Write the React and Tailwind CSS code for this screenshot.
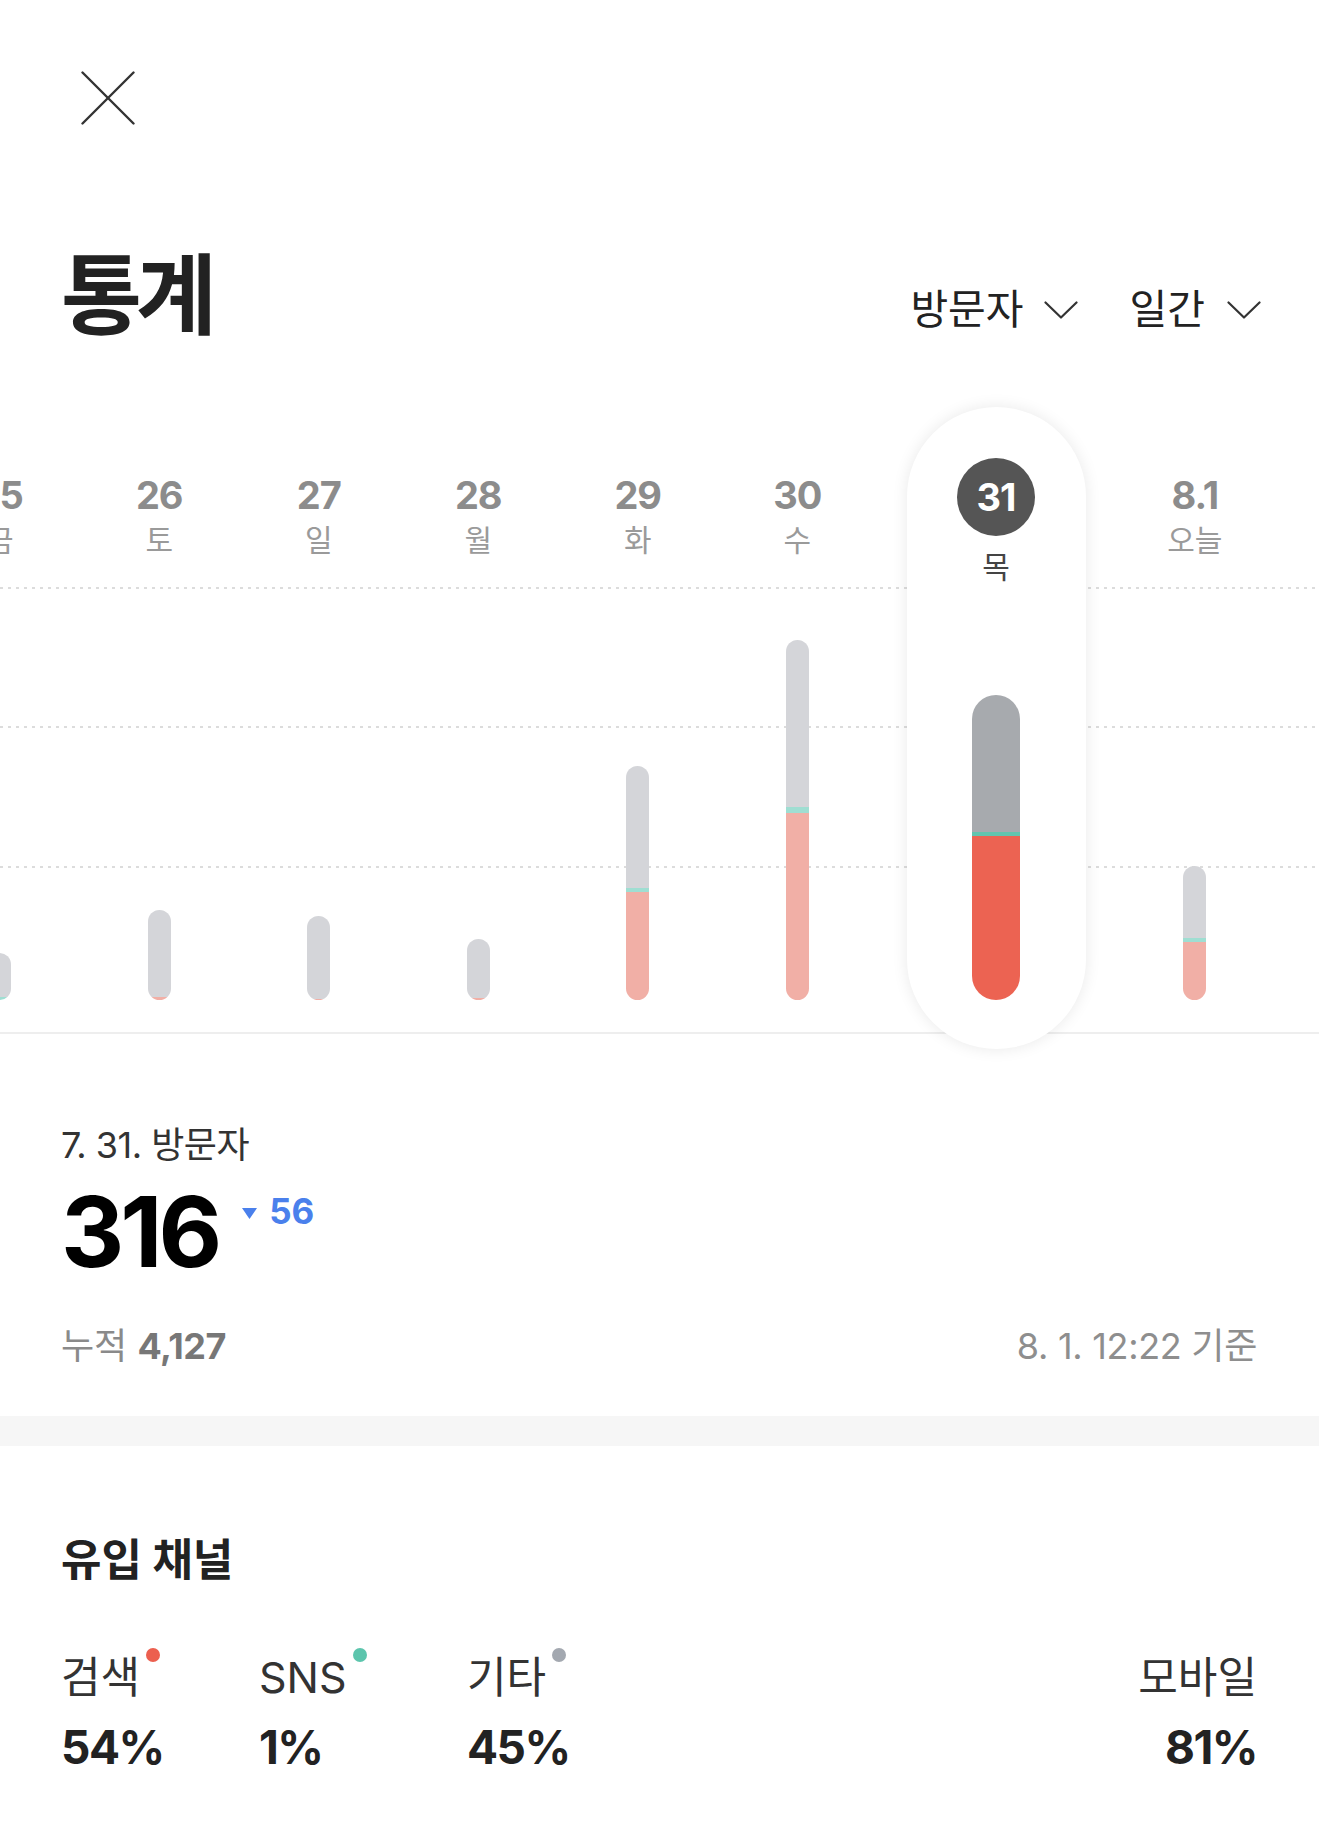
import React from "react";

const days = [
  { d: "25", w: "금", gray: 44, teal: 3, pink: 0 },
  { d: "26", w: "토", gray: 87, teal: 0, pink: 3 },
  { d: "27", w: "일", gray: 83, teal: 0, pink: 1 },
  { d: "28", w: "월", gray: 59, teal: 0, pink: 2 },
  { d: "29", w: "화", gray: 122, teal: 4, pink: 108 },
  { d: "30", w: "수", gray: 167, teal: 6, pink: 187 },
  { d: "31", w: "목", gray: 137, teal: 4, pink: 164, active: true },
  { d: "8.1", w: "오늘", gray: 72, teal: 4, pink: 58 },
];

const channels = [
  { name: "검색", pct: "54%", dot: "bg-[#ec5f4f]", width: "w-[198px]" },
  { name: "SNS", pct: "1%", dot: "bg-[#5cc5ad]", width: "w-[208px]" },
  { name: "기타", pct: "45%", dot: "bg-[#a3a8b0]", width: "w-[160px]" },
];

const Chevron = ({ className }) => (
  <svg width="34" height="18" viewBox="0 0 34 18" className={className}>
    <polyline points="1.5,1.5 17,16.5 32.5,1.5" fill="none" stroke="#333" strokeWidth="2.2" strokeLinecap="round" strokeLinejoin="round" />
  </svg>
);

const Bar = ({ gray, teal, pink, active }) => (
  <div className={`flex flex-col overflow-hidden rounded-full ${active ? "w-[48px]" : "w-[23px]"}`}>
    <div className={active ? "bg-[#a7aaae]" : "bg-[#d4d5d9]"} style={{ height: gray }} />
    {teal > 0 && <div className={active ? "bg-[#62c4ae]" : "bg-[#9fded2]"} style={{ height: teal }} />}
    {pink > 0 && <div className={active ? "bg-[#ec6352]" : "bg-[#f1afa6]"} style={{ height: pink }} />}
  </div>
);

const dotted =
  "absolute left-0 right-0 h-[2px] [background-image:linear-gradient(to_right,#dcdcdc_3px,transparent_3px)] [background-size:8px_2px]";

export default function App() {
  return (
    <div className="w-[1319px] min-h-[1843px] bg-white overflow-hidden font-['Inter','Noto_Sans_CJK_KR',sans-serif]">
      {/* === Close === */}
      <div className="pt-[71px] pl-[81px]">
        <svg width="54" height="54" viewBox="0 0 54 54">
          <line x1="1.5" y1="1.5" x2="52.5" y2="52.5" stroke="#333" strokeWidth="2.4" strokeLinecap="round" />
          <line x1="52.5" y1="1.5" x2="1.5" y2="52.5" stroke="#333" strokeWidth="2.4" strokeLinecap="round" />
        </svg>
      </div>

      {/* === Title row === */}
      <div className="flex items-start justify-between pl-[61px] pr-[58px] mt-[126px]">
        <h1 className="text-[88px] leading-none font-bold tracking-[-6px] text-[#222]">통계</h1>
        <div className="flex items-center mt-[38px] text-[41px] leading-none text-[#222]">
          <span>방문자</span>
          <Chevron className="ml-[20px]" />
          <span className="ml-[52px]">일간</span>
          <Chevron className="ml-[22px]" />
        </div>
      </div>

      {/* === Chart === */}
      <div className="relative mt-[68px] h-[642px]">
        <div className={`${dotted} top-[180px]`} />
        <div className={`${dotted} top-[319px]`} />
        <div className={`${dotted} top-[459px]`} />
        <div className="absolute left-0 right-0 top-[625px] h-[2px] bg-[#eeeeee]" />

        <div className="relative flex h-full ml-[-80px]">
          {days.map((day) =>
            day.active ? (
              <div key={day.d} className="w-[238px] shrink-0 flex justify-center h-full">
                <div className="w-[179px] h-full rounded-full bg-white shadow-[0_0_16px_rgba(0,0,0,0.09)] flex flex-col items-center pt-[51px] pb-[49px]">
                  <div className="w-[78px] h-[78px] rounded-full bg-[#555555] text-white text-[38px] leading-none font-bold flex items-center justify-center tracking-[-1px]">
                    {day.d}
                  </div>
                  <div className="mt-[16px] text-[30px] leading-none text-[#444]">{day.w}</div>
                  <div className="flex-1" />
                  <Bar {...day} />
                </div>
              </div>
            ) : (
              <div key={day.d} className="w-[159.5px] shrink-0 flex flex-col items-center h-full pt-[69px] pb-[49px]">
                <div className="text-[38px] leading-none font-bold text-[#8c8c8c] tracking-[-1px]">{day.d}</div>
                <div className="mt-[11px] text-[30px] leading-none text-[#9a9a9a]">{day.w}</div>
                <div className="flex-1" />
                <Bar {...day} />
              </div>
            )
          )}
        </div>
      </div>

      {/* === Summary === */}
      <div className="pl-[61px] pr-[62px] mt-[78px]">
        <div className="text-[36px] leading-none text-[#333] tracking-[-0.5px]">7. 31. 방문자</div>
        <div className="flex items-start mt-[20px]">
          <span className="text-[98px] leading-none font-bold tracking-[-4px] text-black">316</span>
          <div className="flex items-center ml-[24px] mt-[11px] text-[#4a80ec]">
            <svg width="15" height="11" viewBox="0 0 15 11" className="mt-[3px]">
              <polygon points="0,0 15,0 7.5,11" fill="#4a80ec" />
            </svg>
            <span className="ml-[12px] text-[35px] leading-none font-bold">56</span>
          </div>
        </div>
        <div className="flex justify-between mt-[47px] text-[36px] leading-none">
          <div className="text-[#8a8a8a]">
            누적 <span className="font-bold text-[#777] tracking-[-0.5px]">4,127</span>
          </div>
          <div className="text-[#8e8e8e] tracking-[-0.3px]">8. 1. 12:22 기준</div>
        </div>
      </div>

      {/* === Divider band === */}
      <div className="mt-[52px] h-[30px] bg-[#f6f6f6]" />

      {/* === Channels === */}
      <div className="pl-[61px] pr-[62px] mt-[92px]">
        <h2 className="text-[44px] leading-none font-bold text-[#222]">유입 채널</h2>
        <div className="flex justify-between mt-[74px]">
          <div className="flex">
            {channels.map((c) => (
              <div key={c.name} className={c.width}>
                <div className="flex items-start">
                  <span className="text-[43px] leading-none text-[#333]">{c.name}</span>
                  <span className={`ml-[6px] -mt-[8px] w-[14px] h-[14px] rounded-full ${c.dot}`} />
                </div>
                <div className="mt-[25px] text-[46px] leading-none font-bold text-[#222] tracking-[-1.5px]">{c.pct}</div>
              </div>
            ))}
          </div>
          <div className="text-right">
            <div className="text-[43px] leading-none text-[#333]">모바일</div>
            <div className="mt-[25px] text-[46px] leading-none font-bold text-[#222] tracking-[-1.5px]">81%</div>
          </div>
        </div>
      </div>
    </div>
  );
}
